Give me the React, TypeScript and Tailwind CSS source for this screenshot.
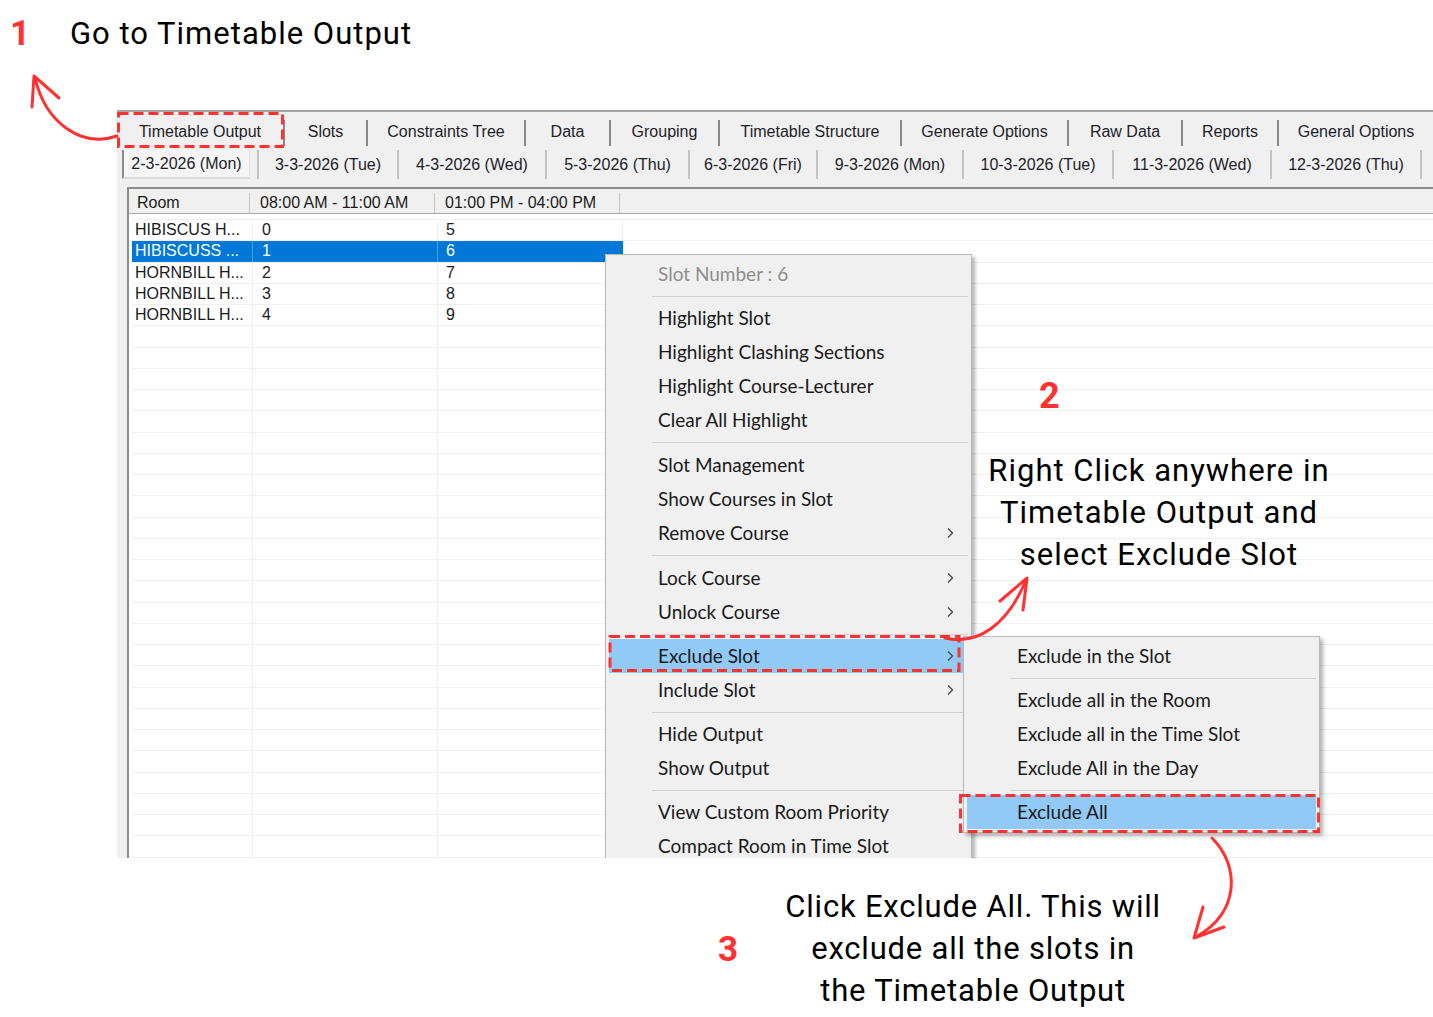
import { Fragment } from "react"

const winFont = "font-['Liberation_Sans',Arial,sans-serif]"
const menuFont = "font-['Lato','Noto_Sans',sans-serif]"
const noteFont = "font-['Roboto','Open_Sans',sans-serif]"

const tabs = [
  { label: "Timetable Output", w: "w-[166px]", active: true },
  { label: "Slots", w: "w-[83px]" },
  { label: "Constraints Tree", w: "w-[158px]" },
  { label: "Data", w: "w-[85px]" },
  { label: "Grouping", w: "w-[109px]" },
  { label: "Timetable Structure", w: "w-[182px]" },
  { label: "Generate Options", w: "w-[167px]" },
  { label: "Raw Data", w: "w-[114px]" },
  { label: "Reports", w: "w-[96px]" },
  { label: "General Options", w: "w-[156px]" },
]

const days = [
  { label: "3-3-2026 (Tue)", w: "w-[140px]" },
  { label: "4-3-2026 (Wed)", w: "w-[148px]" },
  { label: "5-3-2026 (Thu)", w: "w-[143px]" },
  { label: "6-3-2026 (Fri)", w: "w-[128px]" },
  { label: "9-3-2026 (Mon)", w: "w-[146px]" },
  { label: "10-3-2026 (Tue)", w: "w-[150px]" },
  { label: "11-3-2026 (Wed)", w: "w-[158px]" },
  { label: "12-3-2026 (Thu)", w: "w-[150px]" },
]

const rooms = [
  ["HIBISCUS H...", "0", "5"],
  ["HIBISCUSS ...", "1", "6"],
  ["HORNBILL H...", "2", "7"],
  ["HORNBILL H...", "3", "8"],
  ["HORNBILL H...", "4", "9"],
]
const rows = [...rooms, ...Array.from({ length: 26 }, () => ["", "", ""])]

type Entry = { label: string; sub?: boolean; muted?: boolean; active?: boolean } | "sep10" | "sep11"

const mainMenu: Entry[] = [
  { label: "Slot Number : 6", muted: true },
  "sep10",
  { label: "Highlight Slot" },
  { label: "Highlight Clashing Sections" },
  { label: "Highlight Course-Lecturer" },
  { label: "Clear All Highlight" },
  "sep11",
  { label: "Slot Management" },
  { label: "Show Courses in Slot" },
  { label: "Remove Course", sub: true },
  "sep11",
  { label: "Lock Course", sub: true },
  { label: "Unlock Course", sub: true },
  "sep10",
  { label: "Exclude Slot", sub: true, active: true },
  { label: "Include Slot", sub: true },
  "sep10",
  { label: "Hide Output" },
  { label: "Show Output" },
  "sep10",
  { label: "View Custom Room Priority" },
  { label: "Compact Room in Time Slot" },
]

const excludeMenu: Entry[] = [
  { label: "Exclude in the Slot" },
  "sep10",
  { label: "Exclude all in the Room" },
  { label: "Exclude all in the Time Slot" },
  { label: "Exclude All in the Day" },
  "sep10",
  { label: "Exclude All", active: true },
]

function Chevron() {
  return (
    <svg width="8" height="12" viewBox="0 0 8 12" fill="none">
      <path d="M2 1.5 L6.5 6 L2 10.5" stroke="#4a4a4a" strokeWidth="1.4" />
    </svg>
  )
}

function MenuList({ entries, textPad }: { entries: Entry[]; textPad: string }) {
  return (
    <>
      {entries.map((e, i) => {
        if (e === "sep10" || e === "sep11") {
          return (
            <div key={i} className={`${e === "sep10" ? "h-[10px]" : "h-[11px]"} flex items-center pl-[43px]`}>
              <div className="h-px flex-1 bg-[#d3d3d3]" />
            </div>
          )
        }
        return (
          <div
            key={i}
            className={`h-[34px] flex items-center justify-between ${textPad} pr-[14px] ${e.active ? "bg-[#91c9f7]" : ""}`}
          >
            <span className={e.muted ? "text-[#8e8e8e]" : "text-[#1a1a1a]"}>{e.label}</span>
            {e.sub && <Chevron />}
          </div>
        )
      })}
    </>
  )
}

function TimetableWindow() {
  return (
    <div className={`relative ml-[117px] w-[1316px] h-[748px] overflow-hidden bg-[#f0f0f0] border-t-2 border-[#a3a3a3] ${winFont} text-[16px]`}>
      {/* main tab strip */}
      <div className="flex h-[36px] pt-[4px]">
        {tabs.map((t) => (
          <div key={t.label} className={`${t.w} shrink-0 flex items-center`}>
            {!t.active && <span className="w-[2px] h-[26px] mt-[2px] bg-[#888]" />}
            <span className="flex-1 text-center text-[#1e1d2a] whitespace-nowrap">{t.label}</span>
          </div>
        ))}
      </div>

      {/* day tabs */}
      <div className="flex h-[33px] items-center">
        <div className="w-[140px] shrink-0 h-full flex items-center pl-[5px]">
          <div className="w-[128px] h-[29px] flex items-center justify-center bg-[#f5f5f5] border-l-2 border-b-2 border-l-[#8c8c8c] border-b-[#dadada] border-r border-r-[#e2e2e2] text-[#1e1d2a] whitespace-nowrap">
            2-3-2026 (Mon)
          </div>
        </div>
        {days.map((d) => (
          <div key={d.label} className={`${d.w} shrink-0 flex items-center`}>
            <span className="w-[2px] h-[29px] bg-[#c2c2c2]" />
            <span className="flex-1 text-center text-[#1e1d2a] whitespace-nowrap">{d.label}</span>
          </div>
        ))}
        <span className="w-[2px] h-[29px] bg-[#c2c2c2]" />
      </div>

      <div className="h-[6px]" />

      {/* grid */}
      <div className="ml-[10px] border-l-2 border-t-2 border-[#8d8d8d] h-full bg-white">
        <div className="flex h-[25px] pt-[4px] bg-[#f0f0f0] border-b border-[#a8a8a8] text-[#1a1a1a]">
          <div className="w-[121px] border-r border-[#c6c6c6] flex items-center pl-[8px]">Room</div>
          <div className="w-[185px] border-r border-[#c6c6c6] flex items-center pl-[10px]">08:00 AM - 11:00 AM</div>
          <div className="w-[185px] border-r border-[#c6c6c6] flex items-center pl-[10px]">01:00 PM - 04:00 PM</div>
          <div className="flex-1" />
        </div>
        <div className="pt-[5px] pl-[3px]">
          {rows.map((r, i) => {
            const sel = i === 1
            return (
              <div key={i} className="flex h-[21.25px] border-t border-[#f0f0f0]">
                <div className={`w-[121px] border-r flex items-center pl-[3px] ${sel ? "bg-[#0078d7] text-white border-[#4a9be0]" : "text-[#1a1a1a] border-[#f0f0f0]"}`}>{r[0]}</div>
                <div className={`w-[185px] border-r flex items-center pl-[9px] ${sel ? "bg-[#0078d7] text-white border-[#4a9be0]" : "text-[#1a1a1a] border-[#f0f0f0]"}`}>{r[1]}</div>
                <div className={`w-[185px] border-r flex items-center pl-[8px] ${sel ? "bg-[#0078d7] text-white border-[#0078d7]" : "text-[#1a1a1a] border-[#f0f0f0]"}`}>{r[2]}</div>
                <div className="flex-1" />
              </div>
            )
          })}
        </div>
      </div>

      {/* right-click menu */}
      <div className={`absolute left-[488px] top-[142px] w-[367px] h-[640px] bg-[#f0f0f0] border border-[#b9b9b9] shadow-[3px_3px_4px_rgba(0,0,0,0.3)] pt-[2px] px-[3px] ${menuFont} text-[19px]`}>
        <MenuList entries={mainMenu} textPad="pl-[49px]" />
      </div>

      {/* Exclude Slot submenu */}
      <div className={`absolute left-[846px] top-[524px] w-[357px] bg-[#f0f0f0] border border-[#b9b9b9] shadow-[3px_3px_4px_rgba(0,0,0,0.3)] pt-[2px] pb-[3px] px-[3px] ${menuFont} text-[19px]`}>
        <MenuList entries={excludeMenu} textPad="pl-[50px]" />
      </div>
    </div>
  )
}

function Marks() {
  return (
    <svg className="absolute inset-0 pointer-events-none" width="1433" height="1017" viewBox="0 0 1433 1017" fill="none">
      <g stroke="#ff3131" strokeWidth="3" strokeDasharray="10 5">
        <rect x="118.5" y="113.5" width="164" height="33" />
        <rect x="610" y="636.5" width="349" height="34" />
        <rect x="960.5" y="795.5" width="358" height="36" />
      </g>
      <g stroke="#ff3131" strokeWidth="3" strokeLinecap="round" strokeLinejoin="round">
        <path d="M117 136 C 82 148 46 124 35 78" />
        <path d="M32 107 L34 76 L59 98" />
        <path d="M945 638 C 978 646 1008 624 1026 580" />
        <path d="M1000 601 L1027 578 L1023 610" />
        <path d="M1212 838 C 1240 866 1240 912 1196 937" />
        <path d="M1203 907 L1194 938 L1224 927" />
      </g>
    </svg>
  )
}

export default function App() {
  return (
    <div className="relative w-[1433px] h-[1017px] bg-white overflow-hidden">
      <div className={`flex items-center h-[66px] ${noteFont}`}>
        <span className="w-[70px] pl-[10px] text-[35px] font-bold text-[#ff3131] leading-none">1</span>
        <span className="text-[31px] tracking-[1px] text-black leading-none">Go to Timetable Output</span>
      </div>

      <div className="h-[44px]" />
      <TimetableWindow />

      <div className={`flex items-center pt-[28px] pl-[718px] ${noteFont}`}>
        <span className="text-[35px] font-bold text-[#ff3131] leading-none">3</span>
        <p className="ml-[25px] w-[420px] text-center text-[31px] tracking-[0.8px] leading-[42px] text-black">
          Click Exclude All. This will
          <br />
          exclude all the slots in
          <br />
          the Timetable Output
        </p>
      </div>

      <span className={`absolute left-[1039px] top-[375px] text-[36px] font-bold text-[#ff3131] leading-[42px] ${noteFont}`}>2</span>
      <p className={`absolute left-[959px] top-[450px] w-[400px] text-center text-[31px] tracking-[1px] leading-[42px] text-black ${noteFont}`}>
        {["Right Click anywhere in", "Timetable Output and", "select Exclude Slot"].map((l, i) => (
          <Fragment key={i}>
            {l}
            {i < 2 && <br />}
          </Fragment>
        ))}
      </p>

      <Marks />
    </div>
  )
}
